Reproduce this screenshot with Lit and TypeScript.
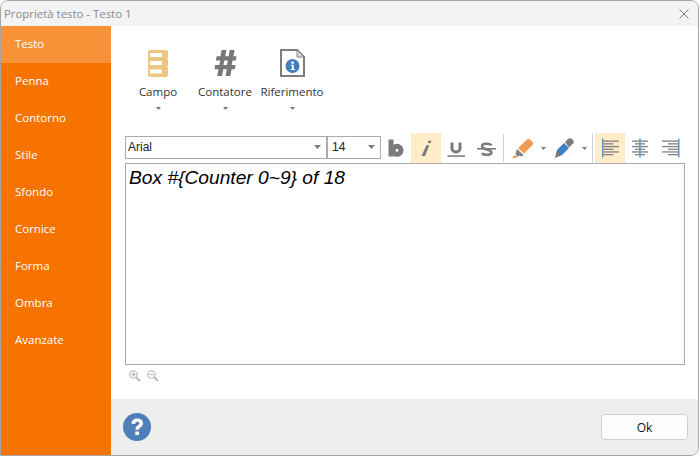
import { LitElement, html, css, svg } from "lit";
import { customElement } from "lit/decorators.js";

const NAV = ["Testo", "Penna", "Contorno", "Stile", "Sfondo", "Cornice", "Forma", "Ombra", "Avanzate"];

const arrow = svg`<svg width="7" height="4" viewBox="0 0 7 4"><path d="M0 0h7L3.5 4z" fill="#7a7a7a"/></svg>`;
const smallArrow = svg`<svg width="5" height="3" viewBox="0 0 5 3"><path d="M0 0h5L2.500 3z" fill="#7a7a7a"/></svg>`;

const alignIcon = (rows: [number, number][], bar: number) => svg`<svg width="20" height="20" viewBox="0 0 20 20">
  ${rows.map(([x, w], i) => svg`<rect x="${x}" y="${2.5 + i * 2.7}" width="${w}" height="1.3" fill="#808080"/>`)}
  <rect x="${bar}" y="0.5" width="1.5" height="19" fill="#5f93c8"/>
</svg>`;

@customElement("app-root")
export class AppRoot extends LitElement {
  static styles = css`
    :host { display: block; width: 700px; height: 456px; background: #fff; font-family: "Open Sans", "Noto Sans", sans-serif; overflow: hidden; }
    .win { box-sizing: border-box; width: 699px; height: 456px; border: 1px solid #a6a6a6; border-radius: 8px 8px 8px 0; overflow: hidden; display: flex; flex-direction: column; background: #fff; }
    .title { height: 25px; flex: none; background: #f3f3f3; display: flex; align-items: center; justify-content: space-between; padding: 0 9px 0 3px; color: #8a8a8a; font-size: 11.4px; }
    .body { flex: 1; display: flex; min-height: 0; }
    .nav { width: 110px; flex: none; background: #f67300; display: flex; flex-direction: column; }
    .nav div { height: 37px; box-sizing: border-box; padding: 0 0 2px 14px; display: flex; align-items: center; color: #fff; font-size: 11.5px; }
    .nav .on { background: #f79239; }
    .right { flex: 1; display: flex; flex-direction: column; min-width: 0; }
    .main { flex: 1; padding: 0 13px 0 14px; display: flex; flex-direction: column; }
    .tools { height: 110px; padding-top: 21px; box-sizing: border-box; display: flex; flex: none; }
    .tool { display: flex; flex-direction: column; align-items: center; color: #333; font-size: 11.5px; }
    .tool .ic { height: 32px; display: flex; align-items: center; justify-content: center; }
    .tool .lb { margin-top: 5px; line-height: 16px; white-space: nowrap; }
    .tool .ar { margin-top: 7px; line-height: 3px; display: flex; }
    .t1 { width: 66px; } .t2 { width: 68px; } .t3 { width: 66px; }
    .fmt { height: 30px; flex: none; display: flex; align-items: center; margin-top: -3px; }
    .sel { box-sizing: border-box; height: 23px; margin-bottom: 2px; border: 1px solid #ababab; background: #fff; display: flex; align-items: center; justify-content: space-between; padding: 0 5px 0 2px; font-family: "Liberation Sans", sans-serif; font-size: 12px; color: #222; }
    .s1 { width: 202px; } .s2 { width: 54px; padding-left: 4px; }
    .btn { width: 30px; height: 30px; display: flex; align-items: center; justify-content: center; flex: none; }
    .btn.on { background: #ffecc9; }
    .sep { width: 1px; height: 28px; background: #d2d2d2; flex: none; }
    .sep.a { margin-left: 2px; }
    .sep.b { margin-right: 2px; }
    .color { display: flex; align-items: center; flex: none; box-sizing: border-box; }
    .c1 { width: 50px; padding-left: 8px; gap: 7px; }
    .c2 { width: 38px; gap: 8px; }
    .ed { flex: none; height: 202px; box-sizing: border-box; border: 1px solid #ababab; padding: 3px 3px; font: italic 19.2px/22px "Liberation Sans", sans-serif; color: #000; }
    .zoom { display: flex; gap: 6px; padding: 5px 0 0 4px; height: 20px; }
    .foot { height: 56px; flex: none; background: #eeeeee; display: flex; align-items: center; justify-content: space-between; padding: 0 10px 0 12px; }
    .ok { box-sizing: border-box; width: 87px; height: 26px; background: #fdfdfd; border: 1px solid #d0d0d0; border-radius: 4px; display: flex; align-items: center; justify-content: center; font-size: 12px; color: #111; }
  `;

  render() {
    const left: [number, number][] = [[3.5, 15.5], [3.5, 10], [3.5, 15.5], [3.5, 10], [3.5, 15.5], [3.5, 10]];
    const mid: [number, number][] = [[2, 16], [5, 10], [2, 16], [5, 10], [2, 16], [5, 10]];
    const rightRows: [number, number][] = [[2, 16], [8, 10], [2, 16], [8, 10], [2, 16], [8, 10]];
    return html`<div class="win">
      <div class="title"><span>Proprietà testo - Testo 1</span>
        <svg width="10" height="10" viewBox="0 0 10 10"><path d="M.5.5l9 9M9.500.5l-9 9" stroke="#777" fill="none"/></svg>
      </div>
      <div class="body">
        <div class="nav">${NAV.map((n, i) => html`<div class=${i === 0 ? "on" : ""}>${n}</div>`)}</div>
        <div class="right">
          <div class="main">
            <div class="tools">
              <div class="tool t1"><div class="ic">
                <svg width="20" height="27" viewBox="0 0 20 27"><path fill-rule="evenodd" fill="#edc77f" d="M2 0h16a2 2 0 0 1 2 2v5.500l-1 1 1 1v6l-1 1 1 1V25a2 2 0 0 1-2 2H2a2 2 0 0 1-2-2V2a2 2 0 0 1 2-2zM2 3v4h12V3zM2 11v4h12v-4zM2 19.500v4h12v-4z"/></svg>
              </div><div class="lb">Campo</div><div class="ar">${smallArrow}</div></div>
              <div class="tool t2"><div class="ic">
                <svg width="24" height="26" viewBox="0 0 24 27"><path fill="#787878" fill-rule="evenodd" d="M8.5 0h5l-1.3 6.5h3.6L17 0h5l-1.300 6.500H24l-.8 4.500h-3.400l-.8 4.500H23l-.8 4.500h-3.300L17.500 27h-5l1.400-7h-3.600L8.900 27h-5l1.400-7H1l.8-4.500h4.400l.8-4.500H2.500l.8-4.500h4zM11.300 11l-.9 4.500h3.600l.9-4.500z"/></svg>
              </div><div class="lb">Contatore</div><div class="ar">${smallArrow}</div></div>
              <div class="tool t3"><div class="ic">
                <svg width="25" height="28" viewBox="0 0 25 28"><path d="M1 1h16l7 7v19H1z" fill="#fff" stroke="#7d7d7d" stroke-width="2"/><path d="M17 1v7h7z" fill="#d8d8d8" stroke="#8a8a8a"/><circle cx="12.500" cy="17" r="7" fill="#3f7fbf"/><rect x="11.300" y="12.500" width="2.500" height="2.200" fill="#fff"/><path d="M10.800 15.800h3v4.200h1v1h-4v-1h1v-3.200h-1z" fill="#fff"/></svg>
              </div><div class="lb">Riferimento</div><div class="ar">${smallArrow}</div></div>
            </div>
            <div class="fmt">
              <div class="sel s1"><span>Arial</span>${arrow}</div>
              <div class="sel s2"><span>14</span>${arrow}</div>
              <div class="btn"><svg width="16" height="18" viewBox="0 0 16 18"><rect x="0.500" y="0.500" width="5" height="17" fill="#7b7b7b"/><circle cx="9" cy="11.300" r="4" fill="none" stroke="#7b7b7b" stroke-width="5"/></svg></div>
              <div class="btn on"><svg width="12" height="18" viewBox="0 0 12 18"><path fill="#7b7b7b" d="M8.500 1.500l2.800.3-.6 2.500-2.800-.3zM6.500 6l2.800.4L5 17H1.500z"/></svg></div>
              <div class="btn"><svg width="18" height="17" viewBox="0 0 18 17"><path fill="none" stroke="#7b7b7b" stroke-width="3" d="M5 2.500v6a4 3.500 0 0 0 8 0v-6"/><rect x="0.500" y="15.300" width="17.500" height="1.500" fill="#7b7b7b"/></svg></div>
              <div class="btn"><svg width="19" height="16" viewBox="0 0 19 16"><path fill="none" stroke="#7b7b7b" stroke-width="2.600" d="M14.500 5.500C13.500 3.300 5 2.800 5 6.300c0 3.700 9.500 2.500 9.500 6.200 0 3-8.500 3-9.500.5"/><rect x="0" y="8" width="19" height="1.600" fill="#7b7b7b"/></svg></div>
              <div class="sep a"></div>
              <div class="color c1"><svg width="22" height="20" viewBox="0 0 22 20"><path fill="#f19a52" d="M6 10L15 1.500c1-1 2-1 3 0l2.500 2.500c1 1 1 2 0 3L12 15.500z"/><path fill="#808080" d="M5 11l6.500 6-2 1.500-2-1-2 1.500-2-3.500z"/><path fill="#f19a52" d="M0 20l3-3 2 2-1 1z"/></svg>${smallArrow}</div>
              <div class="color c2"><svg width="20" height="20" viewBox="0 0 20 20"><path fill="#3f7fc4" d="M3 12l7-7 5 5-7.500 7.500-4.500-1z"/><path fill="#7a7a7a" d="M11 4l3-3c1-1 3-1 4.500.5s1.500 3 .5 4l-4 4z"/><path fill="#7a7a7a" d="M2.500 13l4.500 4.500L1 20z"/></svg>${smallArrow}</div>
              <div class="sep b"></div>
              <div class="btn on">${alignIcon(left, 2)}</div>
              <div class="btn">${alignIcon(mid, 9.2)}</div>
              <div class="btn">${alignIcon(rightRows, 18)}</div>
            </div>
            <div class="ed">Box #{Counter 0~9} of 18</div>
            <div class="zoom">
              <svg width="12" height="12" viewBox="0 0 12 12"><circle cx="4.500" cy="4.500" r="3.700" fill="none" stroke="#c0c0c0" stroke-width="1.300"/><path d="M2.500 4.500h4M4.500 2.500v4" stroke="#b0b0b0"/><path d="M7.500 7.500l3.500 3.500" stroke="#b8b8b8" stroke-width="2"/></svg>
              <svg width="12" height="12" viewBox="0 0 12 12"><circle cx="4.500" cy="4.500" r="3.700" fill="none" stroke="#c0c0c0" stroke-width="1.300"/><path d="M2.500 4.500h4" stroke="#b0b0b0"/><path d="M7.500 7.500l3.500 3.500" stroke="#b8b8b8" stroke-width="2"/></svg>
            </div>
          </div>
          <div class="foot">
            <svg width="28" height="28" viewBox="0 0 28 28"><circle cx="14" cy="14" r="14" fill="#4f7fb8"/><path d="M8.500 10.800c0-3.300 2.300-5.300 5.700-5.300 3.400 0 5.800 1.900 5.800 4.800 0 2.200-1.300 3.200-2.600 4.100-1 .7-1.400 1.200-1.400 2.300h-3.600c0-2.200.8-3.300 2.200-4.300 1.100-.8 1.800-1.200 1.800-2.100 0-.9-.8-1.500-2-1.500-1.300 0-2.200.8-2.200 2.200z" fill="#fff"/><rect x="12.300" y="18.500" width="3.700" height="3.500" fill="#fff"/></svg>
            <div class="ok">Ok</div>
          </div>
        </div>
      </div>
    </div>`;
  }
}
